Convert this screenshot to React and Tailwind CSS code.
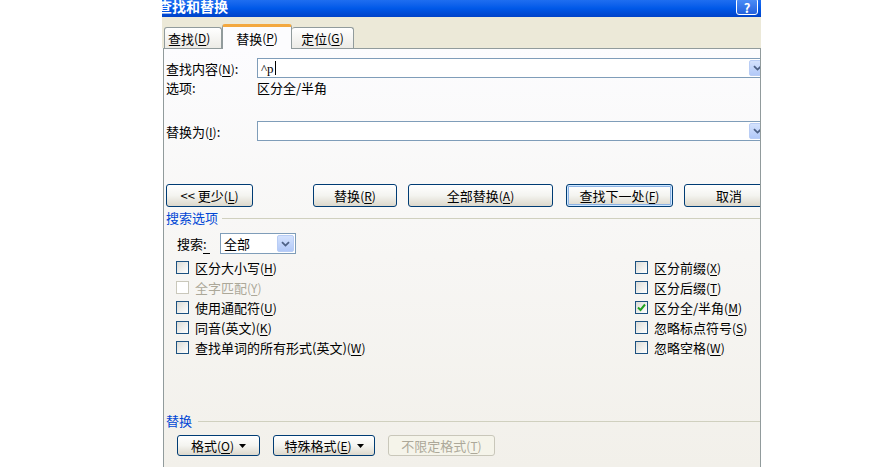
import React from "react";

// 热键字母：(N) 里的字母加下划线
function Key({ k }) {
  return (
    <span className="text-[12px]">
      (<span className="underline underline-offset-2">{k}</span>)
    </span>
  );
}

function Chevron() {
  return (
    <svg width="9" height="6" viewBox="0 0 9 6">
      <path d="M1 1.2 L4.5 4.6 L8 1.2" fill="none" stroke="#4d6185" strokeWidth="1.8" />
    </svg>
  );
}

function DropBtn() {
  return (
    <span className="flex h-full w-[17px] items-center justify-center rounded-[2px] border border-[#b9cdf5] bg-linear-to-b from-[#d4e2fd] to-[#b2c9f8]">
      <Chevron />
    </span>
  );
}

function Caret() {
  return (
    <svg width="7" height="4" viewBox="0 0 7 4" className="ml-[5px]">
      <path d="M0 0 L7 0 L3.5 4 Z" fill="#000" />
    </svg>
  );
}

function Btn({ className, def, disabled, children }) {
  if (disabled) {
    return (
      <div className={"flex items-center justify-center rounded-[3px] border border-[#c9c7ba] bg-[#f5f4ea] text-[#aca899] " + className}>
        {children}
      </div>
    );
  }
  return (
    <div
      className={
        "flex items-center justify-center rounded-[3px] border border-[#003c74] bg-linear-to-b from-white via-[#f4f4f0] to-[#dcd8cc] " +
        (def ? "shadow-[inset_0_0_0_1px_#cee7ff,inset_0_0_0_2px_#8db2e3] " : "") +
        className
      }
    >
      {children}
    </div>
  );
}

function Check({ label, k, checked, disabled }) {
  return (
    <div className="flex h-[20px] items-center">
      {disabled ? (
        <span className="h-[13px] w-[13px] border border-[#cac8bb] bg-white" />
      ) : (
        <span className="flex h-[13px] w-[13px] items-center justify-center border border-[#1c5180] bg-linear-to-br from-[#dcdcd7] to-white">
          {checked && (
            <svg width="9" height="9" viewBox="0 0 9 9">
              <path d="M1 4.5 L3.5 7 L8 1.5" fill="none" stroke="#21a121" strokeWidth="2" />
            </svg>
          )}
        </span>
      )}
      <span className={disabled ? "ml-[6px] text-[#aca899]" : "ml-[6px]"}>
        {label}
        <Key k={k} />
      </span>
    </div>
  );
}

export default function App() {
  return (
    <div className="flex h-[470px] w-[893px] overflow-hidden bg-white font-['Noto_Sans_CJK_SC','Noto_Sans',sans-serif] text-[13px] leading-none text-black">
      <div className="w-[162px] shrink-0" />
      <div className="flex h-[467px] w-[599px] shrink-0 flex-col overflow-hidden">
        {/* 标题栏 */}
        <div className="flex h-[17px] shrink-0 items-start overflow-hidden bg-linear-to-b from-[#1e6ef0] via-[#0058e8] to-[#0042c8]">
          <span className="-ml-[4px] -mt-[1px] text-[14px] font-bold text-white">查找和替换</span>
          <span className="ml-auto mr-[3px] -mt-[2px] flex h-[17px] w-[22px] items-center justify-center rounded-[3px] border border-white bg-linear-to-b from-[#4d8ff8] to-[#2361dd] pt-[2px] text-[13px] font-bold text-white">
            ?
          </span>
        </div>

        {/* 标签页 */}
        <div className="flex h-[31px] shrink-0 items-end bg-[#ece9d8] pl-[2px]">
          <div className="flex h-[21px] w-[58px] items-center rounded-t-[3px] border border-b-0 border-[#919b9c] bg-linear-to-b from-white to-[#ecebe6] pl-[3px]">
            查找<Key k="D" />
          </div>
          <div className="relative z-10 -mb-px flex h-[25px] w-[70px] items-center justify-center rounded-t-[3px] border border-t-[3px] border-b-0 border-[#919b9c] border-t-[#f3a83f] bg-[#fcfcfe]">
            替换<Key k="P" />
          </div>
          <div className="flex h-[21px] w-[62px] items-center justify-center rounded-t-[3px] border border-b-0 border-l-0 border-[#919b9c] bg-linear-to-b from-white to-[#ecebe6]">
            定位<Key k="G" />
          </div>
        </div>

        {/* 面板 */}
        <div className="ml-px flex flex-1 flex-col overflow-hidden border border-b-0 border-[#919b9c] bg-linear-to-b from-[#fcfcfe] to-[#f2f0ea] pl-[2px]">
          <div className="mt-[9px] flex h-[20px] shrink-0 items-center">
            <span className="w-[91px] shrink-0">
              查找内容<Key k="N" />:
            </span>
            <div className="flex h-[20px] w-[511px] shrink-0 items-center border border-[#7f9db9] bg-white pl-[3px]">
              <span className="font-['Liberation_Serif',serif] text-[13px]">^p</span>
              <span className="ml-px h-[14px] w-px bg-black" />
              <span className="ml-auto flex h-[16px] pr-px">
                <DropBtn />
              </span>
            </div>
          </div>

          <div className="mt-px flex h-[17px] shrink-0 items-center">
            <span className="w-[91px] shrink-0">选项:</span>
            <span>区分全/半角</span>
          </div>

          <div className="mt-[25px] flex h-[20px] shrink-0 items-center">
            <span className="w-[91px] shrink-0">
              替换为<Key k="I" />:
            </span>
            <div className="flex h-[20px] w-[511px] shrink-0 items-center border border-[#7f9db9] bg-white">
              <span className="ml-auto flex h-[16px] pr-px">
                <DropBtn />
              </span>
            </div>
          </div>

          <div className="mt-[43px] flex h-[23px] shrink-0">
            <Btn className="w-[87px] shrink-0">
              {"<< 更少"}
              <Key k="L" />
            </Btn>
            <Btn className="ml-[60px] w-[84px] shrink-0">
              替换<Key k="R" />
            </Btn>
            <Btn className="ml-[11px] w-[145px] shrink-0">
              全部替换<Key k="A" />
            </Btn>
            <Btn def className="ml-[13px] w-[107px] shrink-0">
              查找下一处<Key k="F" />
            </Btn>
            <Btn className="ml-[11px] w-[90px] shrink-0">取消</Btn>
          </div>

          <div className="mt-[2px] flex h-[16px] shrink-0 items-center">
            <span className="text-[#0046d5]">搜索选项</span>
            <span className="ml-[4px] mt-[2px] h-px flex-1 bg-[#d0d0bf]" />
          </div>

          <div className="mt-[8px] flex h-[21px] shrink-0 items-center">
            <span className="ml-[11px] w-[43px] shrink-0">
              搜索<span className="border-b border-black">:&nbsp;</span>
            </span>
            <div className="flex h-[21px] w-[76px] items-center border border-[#7f9db9] bg-white pl-[3px]">
              <span>全部</span>
              <span className="ml-auto flex h-[17px] pr-px">
                <DropBtn />
              </span>
            </div>
          </div>

          <div className="mt-[3px] flex shrink-0">
            <div className="ml-[10px] w-[459px] shrink-0">
              <Check label="区分大小写" k="H" />
              <Check label="全字匹配" k="Y" disabled />
              <Check label="使用通配符" k="U" />
              <Check label="同音(英文)" k="K" />
              <Check label="查找单词的所有形式(英文)" k="W" />
            </div>
            <div>
              <Check label="区分前缀" k="X" />
              <Check label="区分后缀" k="T" />
              <Check label="区分全/半角" k="M" checked />
              <Check label="忽略标点符号" k="S" />
              <Check label="忽略空格" k="W" />
            </div>
          </div>

          <div className="mt-[55px] flex h-[16px] shrink-0 items-center">
            <span className="text-[#0046d5]">替换</span>
            <span className="ml-[6px] mt-[2px] h-px flex-1 bg-[#d0d0bf]" />
          </div>

          <div className="mt-[7px] flex h-[21px] shrink-0">
            <Btn className="ml-[11px] w-[83px] shrink-0">
              格式<Key k="O" />
              <Caret />
            </Btn>
            <Btn className="ml-[13px] w-[102px] shrink-0">
              特殊格式<Key k="E" />
              <Caret />
            </Btn>
            <Btn disabled className="ml-[13px] w-[107px] shrink-0">
              不限定格式<Key k="T" />
            </Btn>
          </div>
        </div>
      </div>
    </div>
  );
}
